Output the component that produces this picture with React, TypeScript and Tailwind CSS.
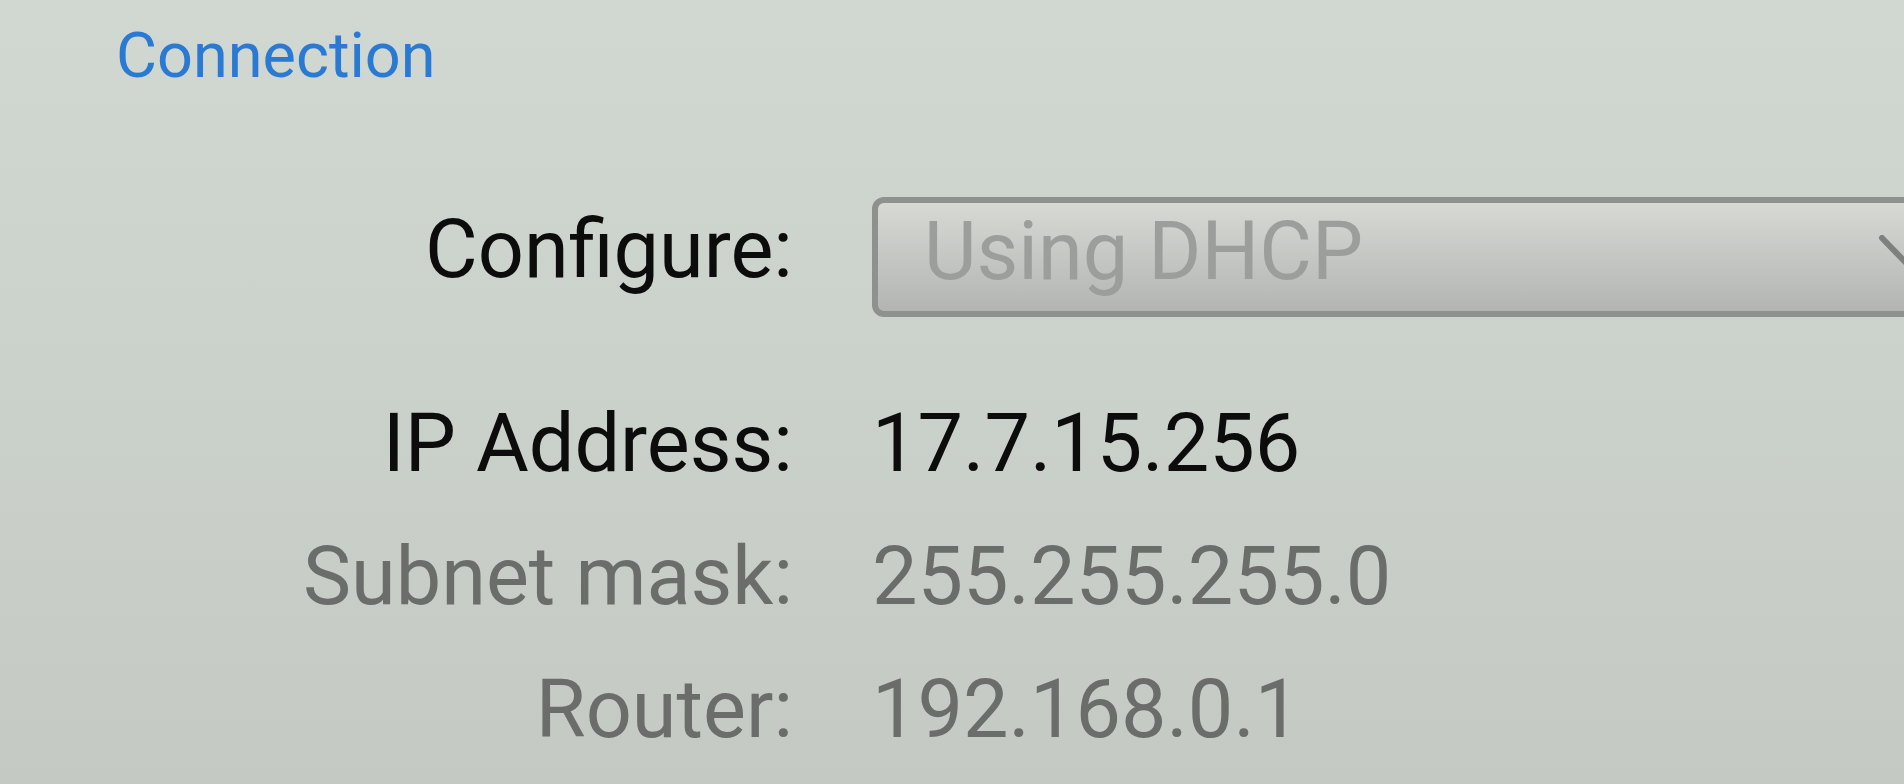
const ROWS = [
  { label: "IP Address:", value: "17.7.15.256", tone: "text-[#0b0c0b]", mt: "mt-[86px]" },
  { label: "Subnet mask:", value: "255.255.255.0", tone: "text-[#6b6d6a]", mt: "mt-[52px]" },
  { label: "Router:", value: "192.168.0.1", tone: "text-[#6b6d6a]", mt: "mt-[52px]" },
];

export default function App() {
  return (
    <div
      className="relative h-[784px] w-full overflow-hidden bg-gradient-to-b from-[#d1d8d1] to-[#c4c9c4]"
      style={{ fontFamily: "Roboto, 'Noto Sans', sans-serif" }}
    >
      {/* Section header */}
      <div className="pl-[116px] pt-[24px]">
        <h2 className="text-[63px] leading-none font-normal text-[#2a79d3]">Connection</h2>
      </div>

      {/* Form */}
      <div className="mt-[110px] grid grid-cols-[793px_1100px] gap-x-[79px]">
        <div className="mt-[12px] text-right text-[81px] leading-none text-[#0b0c0b]">Configure:</div>
        <div className="relative h-[120px] rounded-[12px] border-[6px] border-[#8f918e] bg-gradient-to-b from-[#d6d9d4] to-[#b3b5b2] pl-[46px] pt-[8px]">
          <span className="text-[81px] leading-none text-[#9c9e9b]">Using DHCP</span>
          <svg
            className="absolute left-[1001px] top-[32px]"
            width="66"
            height="40"
            viewBox="0 0 66 40"
            fill="none"
          >
            <path d="M3 3 L33 34 L63 3" stroke="#7e807d" strokeWidth="6" strokeLinecap="round" strokeLinejoin="round" />
          </svg>
        </div>

        {ROWS.map((row) => (
          <div key={row.label} className="contents">
            <div className={`${row.mt} text-right text-[81px] leading-none ${row.tone}`}>{row.label}</div>
            <div className={`${row.mt} text-[81px] leading-none ${row.tone}`}>{row.value}</div>
          </div>
        ))}
      </div>
    </div>
  );
}
